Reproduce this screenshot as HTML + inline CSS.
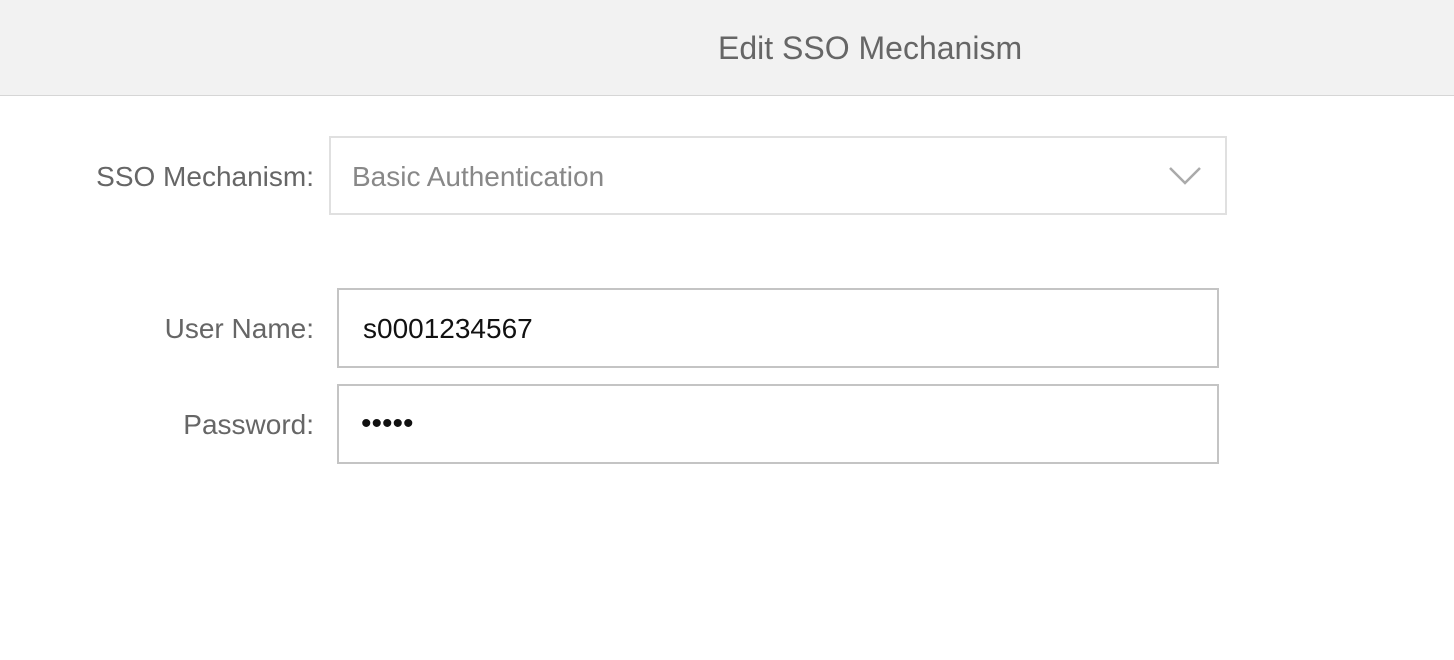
<!DOCTYPE html>
<html><head><style>
body{margin:0;width:1454px;height:660px;background:#fff;font-family:"Liberation Sans",sans-serif;position:relative;overflow:hidden}
.hdr{position:absolute;left:0;top:0;width:1454px;height:95px;background:#f2f2f2;border-bottom:1px solid #d6d6d6}
.hdr span{position:absolute;left:718px;top:30px;font-size:32px;color:#666;white-space:nowrap}
.lbl{position:absolute;right:1140px;font-size:28px;color:#666;white-space:nowrap}
.box{position:absolute;box-sizing:border-box}
.t{position:absolute;font-size:28px;white-space:nowrap}
</style></head><body>
<div class="hdr"><span>Edit SSO Mechanism</span></div>
<div class="lbl" style="top:161px">SSO Mechanism:</div>
<div class="box" style="left:329px;top:136px;width:898px;height:79px;border:2px solid #e0e0e0"></div>
<div class="t" style="left:352px;top:161px;color:#888">Basic Authentication</div>
<svg style="position:absolute;left:1168px;top:165px" width="34" height="22"><path d="M2 3 L17 18 L32 3" fill="none" stroke="#aaa" stroke-width="2.5"/></svg>
<div class="lbl" style="top:313px">User Name:</div>
<div class="box" style="left:337px;top:288px;width:882px;height:80px;border:2px solid #c4c4c4"></div>
<div class="t" style="left:363px;top:313px;color:#111">s0001234567</div>
<div class="lbl" style="top:409px">Password:</div>
<div class="box" style="left:337px;top:384px;width:882px;height:80px;border:2px solid #c4c4c4"></div>
<div class="t" style="left:361px;top:407px;color:#111;font-size:30px;letter-spacing:0px">•••••</div>
</body></html>
